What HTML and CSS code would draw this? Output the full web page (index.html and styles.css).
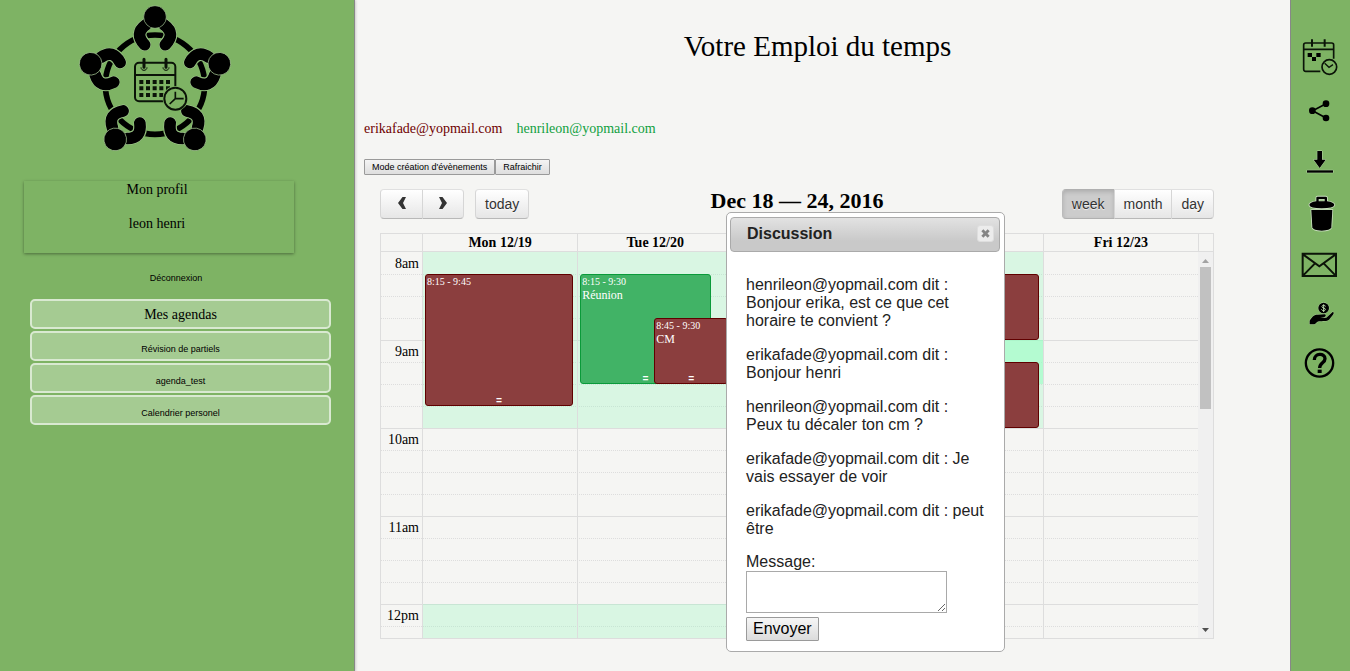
FILE: index.html
```html
<!DOCTYPE html>
<html lang="fr">
<head>
<meta charset="utf-8">
<title>Votre Emploi du temps</title>
<link rel="stylesheet" href="styles.css">
</head>
<body>
<aside class="sidebar">
  <svg class="logo" viewBox="0 0 570 495" aria-label="Agenda partagé">
    <defs>
      <g id="person">
        <g fill="none" stroke-linecap="round">
          <path class="halo" d="M258 74C233 92 233 112 254 134M312 74C337 92 337 112 316 134"/>
          <path class="edge" d="M258 74C233 92 233 112 254 134M312 74C337 92 337 112 316 134"/>
          <path class="arm" d="M258 74C233 92 233 112 254 134M312 74C337 92 337 112 316 134"/>
        </g>
        <circle class="head" cx="285" cy="51" r="34"/>
      </g>
    </defs>
    <circle cx="285" cy="254" r="149" fill="none" stroke="#000" stroke-width="17"/>
    <use href="#person"/>
    <use href="#person" transform="rotate(72 285 254)"/>
    <use href="#person" transform="rotate(144 285 254)"/>
    <use href="#person" transform="rotate(216 285 254)"/>
    <use href="#person" transform="rotate(288 285 254)"/>
    <g fill="none" stroke="#0b1408" stroke-width="6">
      <rect x="225" y="188" width="121" height="116" rx="12"/>
      <path d="M225 225H346"/>
      <path d="M252 178V202M318 178V202" stroke-width="9" stroke-linecap="round"/>
      <path d="M243 202C243 214 261 214 261 202M309 202C309 214 327 214 327 202" stroke-width="3"/>
      <path d="M238 246H331M238 265H331M238 285H331" stroke-width="12" stroke-dasharray="12 8"/>
      <circle cx="346" cy="296" r="38" fill="#7eb364" stroke="none"/>
      <circle cx="346" cy="296" r="33"/>
      <path d="M346 275V296H371M346 296L329 312" stroke-width="5"/>
    </g>
  </svg>
  <section class="profile">
    <p>Mon profil</p>
    <p>leon henri</p>
  </section>
  <button class="logout" type="button">Déconnexion</button>
  <section class="agendas">
    <h2 class="agenda agenda-title">Mes agendas</h2>
    <button class="agenda" type="button">Révision de partiels</button>
    <button class="agenda" type="button">agenda_test</button>
    <button class="agenda" type="button">Calendrier personel</button>
  </section>
</aside>

<main class="main">
  <h1 class="title">Votre Emploi du temps</h1>
  <p class="members"><span class="erika">erikafade@yopmail.com</span><span class="henri">henrileon@yopmail.com</span></p>
  <div class="actions"><button type="button">Mode création d'évènements</button><button type="button">Rafraichir</button></div>

  <section class="calendar">
    <div class="toolbar">
      <div class="tools">
        <div class="group">
          <button class="arrow" type="button" aria-label="Précédent"><svg viewBox="0 0 8 12"><path d="M4.500 0H8L5 6L8 12H4.500L0 6Z"/></svg></button><button class="arrow" type="button" aria-label="Suivant"><svg viewBox="0 0 8 12"><path d="M3.500 0H0L3 6L0 12H3.500L8 6Z"/></svg></button>
        </div>
        <div class="group"><button type="button">today</button></div>
      </div>
      <h2 class="range">Dec 18 — 24, 2016</h2>
      <div class="tools tools-end">
        <div class="group"><button class="active" type="button">week</button><button type="button">month</button><button type="button">day</button></div>
      </div>
    </div>
    <div class="grid">
      <table class="days">
        <tr><th class="axis"></th><th>Mon 12/19</th><th>Tue 12/20</th><th></th><th></th><th>Fri 12/23</th><th class="gutter"></th></tr>
      </table>
      <div class="scroller">
        <div class="times">
          <table class="slots">
            <tr class="hour"><th>8am</th><td></td></tr><tr><th></th><td></td></tr><tr><th></th><td></td></tr><tr><th></th><td></td></tr>
            <tr class="hour"><th>9am</th><td></td></tr><tr><th></th><td></td></tr><tr><th></th><td></td></tr><tr><th></th><td></td></tr>
            <tr class="hour"><th>10am</th><td></td></tr><tr><th></th><td></td></tr><tr><th></th><td></td></tr><tr><th></th><td></td></tr>
            <tr class="hour"><th>11am</th><td></td></tr><tr><th></th><td></td></tr><tr><th></th><td></td></tr><tr><th></th><td></td></tr>
            <tr class="hour"><th>12pm</th><td></td></tr><tr><th></th><td></td></tr>
          </table>
          <div class="columns">
            <div class="column">
              <div class="free" style="top:0;height:176px"></div>
              <div class="free" style="top:352px;height:44px"></div>
              <div class="lane">
                <article class="event red" style="top:22px;height:132px;left:0;right:0"><time>8:15 - 9:45</time><span class="grip">=</span></article>
              </div>
            </div>
            <div class="column">
              <div class="free" style="top:0;height:176px"></div>
              <div class="free" style="top:352px;height:44px"></div>
              <div class="lane">
                <article class="event green" style="top:22px;height:110px;left:0;right:12%"><time>8:15 - 9:30</time><b>Réunion</b><span class="grip">=</span></article>
                <article class="event red" style="top:66px;height:66px;left:50%;right:0"><time>8:45 - 9:30</time><b>CM</b><span class="grip">=</span></article>
              </div>
            </div>
            <div class="column"></div>
            <div class="column">
              <div class="free" style="top:0;height:176px"></div>
              <div class="free common" style="top:88px;height:44px"></div>
              <div class="lane">
                <article class="event red" style="top:22px;height:66px;left:0;right:0"></article>
                <article class="event red" style="top:110px;height:66px;left:0;right:0"></article>
              </div>
            </div>
            <div class="column"></div>
          </div>
        </div>
        <div class="scrollbar">
          <svg viewBox="0 0 15 15"><path d="M4 11L7.500 7L11 11Z" fill="#a3a3a3"/></svg>
          <div class="thumb"></div>
          <svg viewBox="0 0 15 15"><path d="M4 5H11L7.500 9Z" fill="#505050"/></svg>
        </div>
      </div>
    </div>
  </section>
</main>

<nav class="rail">
  <a href="#agenda" aria-label="Agenda"><svg viewBox="18 33 177 153"><g fill="none" stroke="#0b1408" stroke-width="5"><path d="M106 154H62Q56 154 56 148V75Q56 69 62 69H140Q146 69 146 75V116M56 88H146"/><path d="M81 58V80M119 58V80" stroke-width="6"/><circle cx="133" cy="141" r="22"/><path d="M119 130L132 142L144 134" stroke-width="4"/></g><path d="M68 99H81V111H68ZM94 99H107V111H94ZM81 111H93V123H81Z"/></svg></a>
  <a href="#partager" aria-label="Partager"><svg viewBox="18 186 177 153"><path d="M123 251L83 272L123 294" fill="none" stroke="#000" stroke-width="5"/><circle cx="123" cy="251" r="10"/><circle cx="82" cy="272" r="10"/><circle cx="123" cy="294" r="10"/></svg></a>
  <a href="#telecharger" aria-label="Télécharger"><svg viewBox="18 339 177 153"><g stroke="#b9d6aa" stroke-width="3" paint-order="stroke"><path d="M97 393H111V419H122L104 444L86 419H97Z"/><path d="M66 451H144V458H66Z"/></g></svg></a>
  <a href="#supprimer" aria-label="Supprimer"><svg viewBox="18 -18 177 153"><g stroke="#c9dfbe" stroke-width="5" paint-order="stroke"><path d="M79 60H142L139 112Q136 122 110 122Q85 122 82 112Z"/><path fill-rule="evenodd" d="M94 34V23Q94 20 98 20H122Q126 20 126 23V34Q148 37 148 45Q146 55 110 55Q75 55 73 45Q73 37 94 34ZM101 27V34H119V27Z"/></g></svg></a>
  <a href="#messages" aria-label="Messages"><svg viewBox="18 135 177 153"><path d="M53 191H153V258H53ZM54 193L103 229L152 193M54 257L90 220M152 257L116 220" fill="none" stroke="#0b1408" stroke-width="6"/></svg></a>
  <a href="#don" aria-label="Faire un don"><svg viewBox="18 288 177 153"><g stroke="#b9d6aa" stroke-width="2" paint-order="stroke"><path d="M74 403V392C80 382 86 374 97 374L119 373C125 375 122 381 116 382L106 384L124 383L143 366C147 366 147 370 144 374L132 389C126 395 112 392 102 394C95 395 92 402 88 403Z"/><circle cx="116" cy="354" r="16"/></g><path d="M122 349C118 344 109 346 111 351C113 356 122 353 121 359C119 364 112 363 109 358M116 343V366" fill="none" stroke="#b9d6aa" stroke-width="3"/></svg></a>
  <a href="#aide" aria-label="Aide"><svg viewBox="18 441 177 153"><circle cx="103.500" cy="519" r="41" fill="none" stroke="#000" stroke-width="7"/><path d="M88 510C88 489 120 488 120 506C120 519 104 518 104 534" fill="none" stroke="#000" stroke-width="10"/><path d="M98 539H110V549H98Z"/></svg></a>
</nav>

<section class="dialog" role="dialog" aria-labelledby="dialog-title">
  <header class="dialog-bar">
    <h2 id="dialog-title">Discussion</h2>
    <button class="close" type="button" aria-label="Fermer"><svg viewBox="0 0 10 10"><path d="M1.500 1.500L8.500 8.500M8.500 1.500L1.500 8.500" stroke="#858585" stroke-width="3.200"/></svg></button>
  </header>
  <div class="dialog-body">
    <p>henrileon@yopmail.com dit :<br>Bonjour erika, est ce que cet<br>horaire te convient ?</p>
    <p>erikafade@yopmail.com dit :<br>Bonjour henri</p>
    <p>henrileon@yopmail.com dit :<br>Peux tu décaler ton cm ?</p>
    <p>erikafade@yopmail.com dit : Je<br>vais essayer de voir</p>
    <p>erikafade@yopmail.com dit : peut<br>être</p>
    <form class="reply">
      <label for="message">Message:</label>
      <textarea id="message"></textarea>
      <button type="button">Envoyer</button>
    </form>
  </div>
</section>
</body>
</html>
```
FILE: styles.css
```css
* { box-sizing: border-box; }

body {
  position: relative;
  display: flex;
  min-height: 100vh;
  margin: 0;
  background: #f5f5f3;
  color: #000;
  font: 14px/17px "Liberation Serif", serif;
}

h1, h2, p { margin: 0; font-weight: normal; }
button { margin: 0; font-family: "Liberation Sans", sans-serif; }

/* Left column */
.sidebar {
  flex: 0 0 355px;
  background: #7eb364;
  border-right: 1px solid #888;
  box-shadow: 0 0 3px rgba(0, 0, 0, .3);
}
.logo { display: block; width: 190px; height: 165px; margin-left: 60px; }
.halo { stroke: #7eb364; stroke-width: 42; }
.edge { stroke: #a9cb98; stroke-width: 38; }
.arm { stroke: #000; stroke-width: 35; }
.head { fill: #000; stroke: #a9cb98; stroke-width: 2; }

.profile {
  display: flex;
  flex-direction: column;
  gap: 17px;
  height: 72px;
  margin: 16px 60px 0 24px;
  padding-right: 4px;
  text-align: center;
  box-shadow: 0 1px 3px rgba(0, 0, 0, .4);
}
.logout {
  display: block;
  margin: 17px auto 0;
  padding: 0 2px 0 0;
  border: 0;
  background: none;
  font-size: 9px;
  line-height: 16px;
}
.agendas {
  display: flex;
  flex-direction: column;
  gap: 2px;
  margin: 13px 23px 0 30px;
}
.agenda {
  height: 30px;
  padding: 6px 0 0;
  border: 2px solid #d9e9d1;
  border-radius: 5px;
  background: #a5cb92;
  text-align: center;
  font-size: 9px;
}
.agenda-title { padding: 0; font-size: 14px; line-height: 27px; }

/* Schedule */
.main {
  flex: 1;
  min-width: 0;
  padding: 30px 19px 32px 9px;
  border-bottom: 1px solid #ebebe9;
}
.title { font-size: 29px; line-height: 33px; text-align: center; }
.members { display: flex; gap: 14px; margin-top: 57px; }
.erika { color: #6f0000; }
.henri { color: #10a040; }
.actions { display: flex; margin-top: 22px; }
.actions button {
  height: 16px;
  padding: 0 7px;
  border: 1px solid #9a9a9a;
  border-radius: 1px;
  background: linear-gradient(#f4f4f4, #dedede);
  font-size: 9px;
  line-height: 14px;
}

.calendar { margin: 14px 57px 0 16px; }
.toolbar { display: flex; align-items: flex-start; margin-bottom: 14px; }
.tools { display: flex; flex: 1; gap: 11px; }
.tools-end { justify-content: flex-end; }
.group { display: flex; }
.group button {
  height: 30px;
  padding: 0 9px;
  border: 1px solid;
  border-color: #e0e0e0 #d6d6d6 #b8b8b8;
  border-right-width: 0;
  background: linear-gradient(#fff, #e6e6e6);
  color: #333;
  font-size: 14px;
  text-shadow: 0 1px 1px rgba(255, 255, 255, .75);
}
.group button:first-child { border-radius: 4px 0 0 4px; }
.group button:last-child { border-right-width: 1px; border-radius: 0 4px 4px 0; }
.group button:only-child { border-radius: 4px; }
.group .arrow { width: 42px; padding: 0; }
.arrow svg { display: block; width: 8px; height: 12px; margin: 0 auto 2px; fill: #333; }
.group .active {
  border-color: #b0b0b0 #bbb #b0b0b0;
  background: #ccc;
  box-shadow: inset 0 2px 4px rgba(0, 0, 0, .15);
}
.range { font-size: 22px; line-height: 24px; font-weight: bold; }

.grid { border: 1px solid #ddd; }
.days, .slots { width: 100%; border-spacing: 0; table-layout: fixed; }
.days th { height: 18px; padding: 0; border-left: 1px solid #ddd; border-bottom: 1px solid #ddd; line-height: 17px; }
.days .axis { width: 41px; border-left: 0; }
.days .gutter { width: 15px; }
.scroller { display: flex; height: 386px; overflow: hidden; }
.times { position: relative; flex: 1; }
.slots th, .slots td { height: 22px; padding: 0; border-top: 1px dotted #ddd; }
.slots th { width: 41px; padding-right: 3px; font-weight: normal; line-height: 20px; text-align: right; }
.slots .hour th, .slots .hour td { border-top-style: solid; }
.slots tr:first-child th, .slots tr:first-child td { border-top-color: transparent; }

/* Day columns lie over the time slots */
.columns {
  position: absolute;
  inset: 0 0 0 41px;
  display: grid;
  grid-template-columns: repeat(5, 1fr);
  overflow: hidden;
}
.column { position: relative; border-left: 1px solid #ddd; }
.free { position: absolute; left: 0; right: 0; background: rgba(152, 248, 193, .3); }
.common { background: rgba(152, 255, 196, .57); }
.lane { position: absolute; inset: 0 4px 0 2px; }
.event {
  position: absolute;
  padding: 0 1px;
  border: 1px solid;
  border-radius: 3px;
  color: #fff;
  font-size: 12px;
  line-height: 14px;
}
.event time, .event b { display: block; font-weight: normal; }
.event time { font-size: 10px; line-height: 13px; }
.red { background: #8b3e3e; border-color: #600000; }
.green { background: #41b366; border-color: #0a9a3a; }
.grip {
  position: absolute;
  left: 0;
  right: 0;
  bottom: 0;
  font: bold 10px/6px "Liberation Mono", monospace;
  text-align: center;
}

.scrollbar { display: flex; flex-direction: column; width: 15px; background: #f0f0f0; }
.scrollbar svg { width: 15px; height: 15px; }
.thumb { height: 142px; margin: 0 2px auto; background: #c1c1c1; }

/* Right rail */
.rail {
  display: flex;
  flex-direction: column;
  flex: 0 0 60px;
  padding-top: 31px;
  background: #7eb364;
  border-left: 1px solid #888;
}
.rail svg { display: block; width: 59px; height: 51px; }

/* Chat window */
.dialog {
  position: absolute;
  left: 726px;
  top: 212px;
  width: 279px;
  padding: 4px 4px 10px 3px;
  border: 1px solid #aaa;
  border-radius: 5px;
  background: #fff;
  color: #222;
  font: 16px/18px "Liberation Sans", sans-serif;
}
.dialog-bar {
  display: flex;
  align-items: center;
  justify-content: space-between;
  height: 35px;
  padding: 0 5px 2px 16px;
  border: 1px solid #aaa;
  border-radius: 4px;
  background: linear-gradient(#e2e2e2, #c9c9c9 70%);
}
.dialog-bar h2 { font-size: 16px; font-weight: bold; }
.close {
  width: 17px;
  height: 17px;
  padding: 3px;
  border: 1px solid #dedede;
  border-radius: 3px;
  background: #ececec;
}
.close svg { display: block; width: 9px; height: 9px; }
.dialog-body { padding: 24px 8px 0 16px; }
.dialog-body p { margin-bottom: 16px; }
.dialog-body p:last-of-type { margin-bottom: 15px; }
.reply { display: flex; flex-direction: column; align-items: flex-start; }
.reply textarea {
  width: 201px;
  height: 42px;
  margin-bottom: 4px;
  border: 1px solid #a9a9a9;
  background: #fff;
}
.reply button {
  height: 24px;
  padding: 0 6px;
  border: 1px solid #9a9a9a;
  border-radius: 1px;
  background: linear-gradient(#f6f6f6, #dcdcdc);
  font-size: 16px;
}
```
